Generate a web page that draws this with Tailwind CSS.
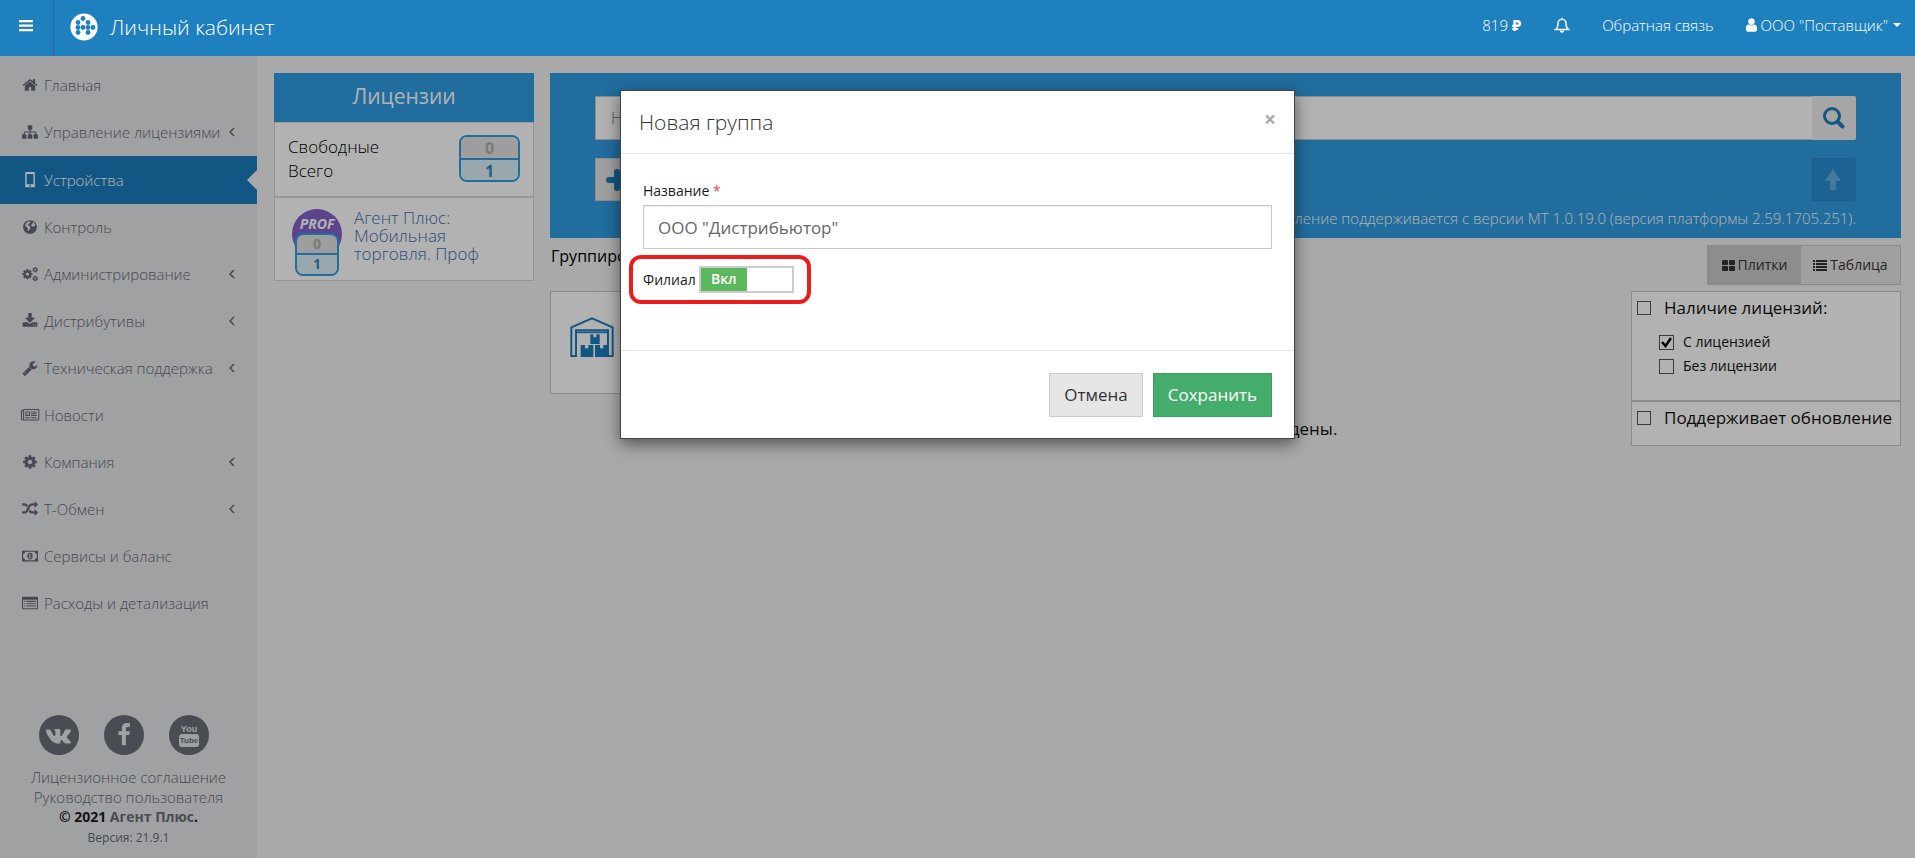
<!DOCTYPE html>
<html lang="ru">
<head>
    <meta charset="UTF-8">
    <meta name="viewport" content="width=device-width, initial-scale=1.0">
    <title>Личный кабинет</title>
    <script src="https://cdn.jsdelivr.net/npm/@tailwindcss/browser@4"></script>
</head>
<body class="min-h-screen flex flex-col bg-[#f2f2f4] font-['Open_Sans','Noto_Sans',sans-serif] text-[14px] leading-[20px] text-[#1b1b1e]">

<!-- Header -->
<header class="relative z-20 h-14 flex items-stretch bg-[#1e80bf] text-white">
    <button type="button" aria-label="Меню" class="w-[54px] border-r border-[#3f6480] flex items-center justify-center pr-0.5 pb-1">
        <svg class="w-[14px] h-[12px]" viewBox="0 0 14 12" fill="currentColor"><path d="M0 0h14v2.200H0zM0 4.500h14v2.200H0zM0 9h14v2.200H0z"/></svg>
    </button>
    <a href="#" class="flex items-center gap-3 pl-4 pb-0.5">
        <svg class="w-7 h-7" viewBox="0 0 28 28"><circle cx="14" cy="14" r="13.6" fill="#fff"/>
            <g fill="#1e80bf"><circle cx="13" cy="5.5" r="2.400"/><circle cx="8" cy="9.500" r="2.400"/><circle cx="18" cy="9.500" r="2.400"/><circle cx="8" cy="14.500" r="2.400"/><circle cx="13" cy="14.500" r="2.400"/><circle cx="18" cy="14.500" r="2.400"/><circle cx="23" cy="14.500" r="2.400"/><circle cx="8" cy="19.500" r="2.400"/><circle cx="18" cy="19.500" r="2.400"/></g>
        </svg>
        <span class="text-[21px] font-light">Личный кабинет</span>
    </a>
    <nav class="ml-auto flex items-center pr-[14px] pb-[6px] text-[15px] font-light">
        <a href="#" class="mr-[33px]">819 <span class="font-extrabold">₽</span></a>
        <button type="button" aria-label="Уведомления" class="mr-8">
            <svg class="w-4 h-4" viewBox="0 0 16 16" fill="none" stroke="currentColor" stroke-width="1.4"><path d="M8 .8v1.4M1.500 12.500C3.500 11 4 9 4 6.500 4 4 5.500 2.400 8 2.400S12 4 12 6.500c0 2.500.5 4.500 2.500 6zM6.500 13.500a1.500 1.500 0 0 0 3 0"/></svg>
        </button>
        <a href="#" class="mr-[31px]">Обратная связь</a>
        <button type="button" class="flex items-center gap-[3px]">
            <svg class="w-[13px] h-[14px]" viewBox="200 100 1400 1600" fill="currentColor"><path d="M1536 1399q0 109-62.500 187t-150.500 78h-854q-88 0-150.500-78t-62.500-187q0-85 8.500-160.500t31.500-152 58.500-131 94-89 134.500-34.500q131 128 313 128t313-128q76 0 134.500 34.500t94 89 58.500 131 31.500 152 8.500 160.500zm-256-887q0 159-112.500 271.500t-271.500 112.500-271.500-112.500-112.500-271.500 112.500-271.500 271.500-112.500 271.500 112.500 112.500 271.500z"/></svg>
            <span>ООО "Поставщик"</span>
            <svg class="w-2 h-1 ml-0.5" viewBox="0 0 8 4" fill="currentColor"><path d="M0 0h8L4 4z"/></svg>
        </button>
    </nav>
</header>

<div class="relative flex-1 flex">
    <!-- Sidebar -->
    <aside class="w-[257px] shrink-0 bg-[#e6e7ea] text-[#626975] flex flex-col pt-[6px] pb-[9px]">
        <nav id="menu" class="flex flex-col text-[15px] font-light"></nav>
        <div class="mt-auto text-center text-[15px] font-light">
            <div class="flex justify-center gap-[25px] pr-[9px] mb-3">
                <a href="#" aria-label="ВКонтакте" class="w-10 h-10 rounded-full bg-[#676d78] text-[#e6e7ea] flex items-center justify-center">
                    <svg class="w-[26px] h-6" viewBox="0 0 1920 1792" fill="currentColor"><path d="M1853 520q23 64-150 294-24 32-65 85-40 51-55 72t-30.500 49.500-12 42 13 34.500 32.500 43 57 53q4 2 5 4 141 131 191 221 3 5 6.500 12.500t7 26.500-.5 34-25 27.500-59 12.500l-256 4q-24 5-56-5t-52-22l-20-12q-30-21-70-64t-68.500-77.500-61-58-56.500-15.500q-3 1-8 3.500t-17 14.500-21.500 29.500-17 52-6.500 77.500q0 15-3.500 27.500t-7.500 18.500l-4 5q-18 19-53 22h-115q-71 4-146-16.500t-131.500-53-103-66-70.500-57.500l-25-24q-10-10-27.500-30t-71.500-91-106-151-122.500-211-130.500-272q-6-16-6-27t3-16l4-6q15-19 57-19l274-2q12 2 23 6.500t16 8.500l5 3q16 11 24 32 20 50 46 103.500t41 81.500l16 29q29 60 56 104t48.500 68.500 41.500 38.500 34 14 27-5q2-1 5-5t12-22 13.500-47 9.500-81 0-125q-2-40-9-73t-14-46l-6-12q-25-34-85-43-13-2 5-24 16-19 38-30 53-26 239-24 82 1 135 13 20 5 33.500 13.500t20.500 24 10.500 32 3.500 45.500-1 55-2.500 70.500-1.500 82.500q0 11-1 42t-.5 48 3.500 40.500 11.500 39 22.500 24.500q8 2 17 4t26-11 38-34.500 52-67 68-107.500q60-104 107-225 4-10 10-17.500t11-10.500l4-3 5-2.500 13-3 20-.5 288-2q39-5 64 2.500t31 16.500z"/></svg>
                </a>
                <a href="#" aria-label="Facebook" class="w-10 h-10 rounded-full bg-[#676d78] text-[#e6e7ea] flex items-center justify-center">
                    <svg class="w-6 h-6" viewBox="0 0 1792 1792" fill="currentColor"><path d="M1343 12v264h-157q-86 0-116 36t-30 108v189h293l-39 296h-254v759h-306v-759h-255v-296h255v-218q0-186 104-288.500t277-102.500q147 0 228 12z"/></svg>
                </a>
                <a href="#" aria-label="YouTube" class="w-10 h-10 rounded-full bg-[#676d78] text-[#e6e7ea] flex flex-col items-center justify-center font-['Liberation_Sans_Narrow','Liberation_Sans',sans-serif] text-[9px] leading-[10px] font-bold">
                    <span>You</span>
                    <span class="bg-[#e6e7ea] text-[#676d78] rounded-[3px] w-5 h-[13px] leading-[13px] text-[8px]">Tube</span>
                </a>
            </div>
            <a href="#" class="block">Лицензионное соглашение</a>
            <a href="#" class="block">Руководство пользователя</a>
            <p class="font-bold text-[#1b1b1e] text-[14px]">© 2021 <a href="#" class="text-[#676d78]">Агент Плюс</a>.</p>
            <p class="text-[12px] leading-[22px] font-normal">Версия: 21.9.1</p>
        </div>
    </aside>

    <!-- Content -->
    <main class="flex-1 flex gap-4 pl-[17px] pr-[14px] pt-[17px] items-start">
        <section class="w-[260px] shrink-0">
            <h2 class="h-[49px] bg-[#2e9ce3] text-white text-[21px] leading-[47px] text-center">Лицензии</h2>
            <div class="h-[76px] bg-white border border-[#d8d8d8] border-b-2 flex justify-between px-[13px] pt-3 text-[17px] leading-6">
                <p class="font-light text-black">Свободные<br>Всего</p>
                <div class="w-[61px] h-[47px] border-2 border-[#2e9ce3] rounded-lg overflow-hidden text-center text-[16px] font-bold leading-[22px]">
                    <div class="h-[23px] bg-[#e3e3e3] border-b-2 border-[#2e9ce3] text-[#b0b0b0]">0</div>
                    <div class="h-[21px] bg-[#def0fa] text-[#2e86c4]">1</div>
                </div>
            </div>
            <div class="h-[83px] bg-white border border-t-0 border-[#d8d8d8] flex gap-3 pl-[17px] pt-[11px]">
                <div class="relative w-[50px] h-[68px] shrink-0">
                    <div class="w-[50px] h-[50px] rounded-full bg-[#8462cb] text-white text-[14px] font-bold italic text-center leading-[30px]">PROF</div>
                    <div class="absolute left-[3px] top-6 w-11 h-[43px] border-2 border-[#2e9ce3] rounded-lg overflow-hidden text-center text-[14px] font-bold leading-[18px]">
                        <div class="h-5 bg-[#e3e3e3] border-b-2 border-[#2e9ce3] text-[#b0b0b0]">0</div>
                        <div class="h-[19px] bg-[#def0fa] text-[#2e86c4]">1</div>
                    </div>
                </div>
                <a href="#" class="text-[17px] leading-[18px] font-light text-[#3f6fae]">Агент Плюс:<br>Мобильная<br>торговля. Проф</a>
            </div>
        </section>

        <section class="flex-1 min-w-0">
            <div class="h-[165px] bg-[#2e9ce3] px-[45px] pt-[23px]">
                <div class="flex">
                    <input type="text" aria-label="Поиск" placeholder="Название" class="flex-1 h-11 bg-white border border-r-0 border-[#c8c8c8] px-[15px] text-[16px] font-light placeholder:text-[#777]">
                    <button type="button" aria-label="Найти" class="w-11 h-11 bg-[#eeeeee] text-[#1b7cbd] flex items-center justify-center rounded-r-[2px]">
                        <svg class="w-6 h-6" viewBox="0 0 24 24" fill="none" stroke="currentColor"><circle cx="10" cy="10" r="7.500" stroke-width="3"/><path d="M15.500 15.500L20.500 20.500" stroke-width="4" stroke-linecap="round"/></svg>
                    </button>
                </div>
                <div class="flex justify-between mt-[18px]">
                    <button type="button" aria-label="Добавить" class="w-11 h-[43px] bg-[#e6e6e6] border border-[#ccc] text-[#1b7cbd] flex items-center justify-center">
                        <svg class="w-[22px] h-[22px]" viewBox="0 0 22 22" stroke="currentColor" stroke-width="6" stroke-linecap="round"><path d="M11 3v16M3 11h16"/></svg>
                    </button>
                    <button type="button" aria-label="Вверх" disabled class="w-11 h-[43px] bg-[#2a8fd0] border border-[#2787c5] text-[#5cb0e4] flex items-center justify-center pr-0.5 rounded-[2px]">
                        <svg class="w-4 h-[21px]" viewBox="0 0 16 21" fill="currentColor"><path d="M8 0l8 12h-5v9H5v-9H0z"/></svg>
                    </button>
                </div>
                <p class="mt-[6px] text-right text-[15px] leading-[22px] font-light text-white">Обновление поддерживается с версии МТ 1.0.19.0 (версия платформы 2.59.1705.251).</p>
            </div>

            <div class="flex justify-between mt-[7px]">
                <p class="text-[16px] leading-[22px] pl-px text-black">Группировка устройств</p>
                <div class="h-10 flex border border-[#c8c8c8] text-[14px] text-[#333]">
                    <button type="button" class="w-[93px] bg-[#cbcbcb] flex items-center justify-center gap-[3px]">
                        <svg class="w-[13px] h-[11px]" viewBox="0 0 13 11" fill="currentColor"><rect width="6" height="5" rx="1"/><rect x="7" width="6" height="5" rx="1"/><rect y="6" width="6" height="5" rx="1"/><rect x="7" y="6" width="6" height="5" rx="1"/></svg>
                        Плитки
                    </button>
                    <button type="button" class="w-[99px] bg-[#e6e6e6] flex items-center justify-center gap-[3px]">
                        <svg class="w-[14px] h-[11px]" viewBox="0 0 14 11" fill="currentColor"><path d="M0 0h2v2H0zM3 0h11v2H3zM0 3h2v2H0zM3 3h11v2H3zM0 6h2v2H0zM3 6h11v2H3zM0 9h2v2H0zM3 9h11v2H3z"/></svg>
                        Таблица
                    </button>
                </div>
            </div>

            <div class="flex items-start gap-[15px] mt-[6px]">
                <div class="flex-1">
                    <div class="w-[340px] h-[103px] bg-white border border-[#c8c8c8] pl-[19px] pt-[25px]">
                        <svg class="w-11 h-10" viewBox="45 51 132 120" fill="none" stroke="#1b7cbd" stroke-width="6"><path d="M49 168V82l62-27 62 27v86h-14V91H63v77z"/><path d="M63 97h96" stroke-width="5"/><path d="M106 103h9v9h9v-9h10v29h-28zM77 135h13v10h10v-10h15v36H77zM120 135h15v10h10v-10h15v36h-40z" fill="#1b7cbd" stroke="none"/></svg>
                    </div>
                    <p class="mt-6 text-center text-[17px] leading-[22px] text-[#111]">Устройства, соответствующие условиям отбора, не найдены.</p>
                </div>
                <div class="w-[270px] bg-white border border-[#c8c8c8] text-[#111]">
                    <div class="h-[110px] border-b-2 border-[#c8c8c8] pl-[5px] pt-1">
                        <label class="flex items-center gap-[13px] text-[17px] leading-6"><input type="checkbox" class="appearance-none w-[14px] h-[14px] border border-[#555]">Наличие лицензий:</label>
                        <label class="flex items-center gap-[9px] ml-[22px] mt-[10px] text-[14px] leading-6">
                            <span class="relative flex"><input type="checkbox" checked class="appearance-none w-[15px] h-[15px] border border-[#555]">
                            <svg class="absolute left-[2px] top-[2px] w-[11px] h-[11px] pointer-events-none" viewBox="0 0 11 11" fill="none" stroke="#000" stroke-width="2.500"><path d="M1 5l3.500 4L10 1"/></svg></span>С лицензией</label>
                        <label class="flex items-center gap-[9px] ml-[22px] text-[14px] leading-6"><input type="checkbox" class="appearance-none w-[15px] h-[15px] border border-[#555]">Без лицензии</label>
                    </div>
                    <div class="h-[43px] pl-[5px] pt-1">
                        <label class="flex items-center gap-[13px] text-[17px] leading-6"><input type="checkbox" class="appearance-none w-[14px] h-[14px] border border-[#555]">Поддерживает обновление</label>
                    </div>
                </div>
            </div>
        </section>
    </main>

    <!-- Modal -->
    <div class="absolute inset-0 z-10 bg-black/30">
        <div role="dialog" aria-labelledby="modalTitle" class="w-[675px] mx-auto mt-[34px] bg-white border border-[#444] shadow-[0_5px_15px_rgba(0,0,0,0.5)]">
            <div class="h-[63px] flex items-center justify-between px-[18px] border-b border-[#e5e5e5]">
                <h4 id="modalTitle" class="text-[21px] font-light text-[#333]">Новая группа</h4>
                <button type="button" aria-label="Закрыть" class="pb-[6px] text-[21px] font-bold text-[#aaa]">×</button>
            </div>
            <form class="h-[196px] px-[22px] pt-[27px]">
                <label for="groupName" class="block text-[14px]">Название <span class="text-[#ee4455]">*</span></label>
                <input id="groupName" type="text" value='ООО "Дистрибьютор"' class="block w-full h-11 mt-1 px-[14px] border border-[#c8c8c8] text-[17px] text-[#666] shadow-[inset_0_1px_1px_rgba(0,0,0,0.075)]">
                <div class="relative flex items-center gap-[3px] mt-[17px] w-fit">
                    <label for="branch">Филиал</label>
                    <button id="branch" type="button" role="switch" aria-checked="true" class="w-[95px] h-[27px] border-2 border-[#ccc] bg-white flex">
                        <span class="w-[46px] h-[23px] leading-[22px] bg-[#5cb85c] text-white font-semibold text-[14px]">Вкл</span>
                    </button>
                    <span class="absolute -left-[14px] -right-[17px] -top-[11px] -bottom-[11px] border-4 border-[#ed1c1c] rounded-xl pointer-events-none"></span>
                </div>
            </form>
            <div class="h-[88px] flex items-start justify-end gap-[10px] px-[22px] pt-[22px] border-t border-[#e5e5e5] text-[17px]">
                <button type="button" class="h-11 px-[14px] bg-[#e6e6e6] border border-[#ccc] text-[#333]">Отмена</button>
                <button type="submit" class="h-11 px-[14px] bg-[#45ad6b] border border-[#3d9c5f] text-white">Сохранить</button>
            </div>
        </div>
    </div>
</div>

<script>
    const icons = {
        home: '<path d="M1472 992v480q0 26-19 45t-45 19h-384v-384h-256v384h-384q-26 0-45-19t-19-45v-480q0-1 .5-3t.5-3l575-474 575 474q1 2 1 6zm223-69l-62 74q-8 9-21 11h-3q-13 0-21-7l-692-577-692 577q-12 8-24 7-13-2-21-11l-62-74q-8-10-7-23.500t11-21.500l719-599q32-26 76-26t76 26l244 204v-195q0-14 9-23t23-9h192q14 0 23 9t9 23v408l219 182q10 8 11 21.500t-7 23.500z"/>',
        sitemap: '<path d="M1792 1248v320q0 40-28 68t-68 28h-320q-40 0-68-28t-28-68v-320q0-40 28-68t68-28h96v-192h-512v192h96q40 0 68 28t28 68v320q0 40-28 68t-68 28h-320q-40 0-68-28t-28-68v-320q0-40 28-68t68-28h96v-192h-512v192h96q40 0 68 28t28 68v320q0 40-28 68t-68 28h-320q-40 0-68-28t-28-68v-320q0-40 28-68t68-28h96v-192q0-52 38-90t90-38h512v-192h-96q-40 0-68-28t-28-68v-320q0-40 28-68t68-28h320q40 0 68 28t28 68v320q0 40-28 68t-68 28h-96v192h512q52 0 90 38t38 90v192h96q40 0 68 28t28 68z"/>',
        mobile: '<path fill-rule="evenodd" d="M460 0h880q100 0 100 100v1520q0 100-100 100h-880q-100 0-100-100v-1520q0-100 100-100zm60 230v1140h760v-1140zm380 1230a90 90 0 1 0 1 0z"/>',
        globe: '<path fill-rule="evenodd" d="M896 128a768 768 0 1 0 1 0zM800 260l160 60-60 140-170 80-60 170 170 60 120 140-60 180-160 260-90-80-30-260-150-170-130-40q10-180 90-300l150-150zm420 50q200 120 270 340l-100 220-90-60-140 70-130-120 40-170 120-80z"/>',
        cogs: '<g transform="translate(-60 250) scale(.74)"><path d="M1152 896q0-106-75-181t-181-75-181 75-75 181 75 181 181 75 181-75 75-181zm512-109v222q0 12-8 23t-20 13l-185 28q-19 54-39 91 35 50 107 138 10 12 10 25t-9 23q-27 37-99 108t-94 71q-12 0-26-9l-138-108q-44 23-91 38-16 136-29 186-7 28-36 28h-222q-14 0-24.500-8.500t-11.500-21.500l-28-184q-49-16-90-37l-141 107q-10 9-25 9-14 0-25-11-126-114-165-168-7-10-7-23 0-12 8-23 15-21 51-66.500t54-70.500q-27-50-41-99l-183-27q-13-2-21-12.500t-8-23.500v-222q0-12 8-23t19-13l186-28q14-46 39-92-40-57-107-138-10-12-10-24 0-10 9-23 26-36 98.500-107.500t94.500-71.500q13 0 26 10l138 107q44-23 91-38 16-136 29-186 7-28 36-28h222q14 0 24.500 8.500t11.500 21.500l28 184q49 16 90 37l142-107q9-9 24-9 13 0 25 10 129 119 165 170 7 8 7 22 0 12-8 23-15 21-51 66.500t-54 70.500q26 50 41 98l183 28q13 2 21 12.500t8 23.500z"/></g><g fill="none" stroke="currentColor"><circle cx="1480" cy="420" r="180" stroke-width="150"/><circle cx="1480" cy="1400" r="180" stroke-width="150"/><circle cx="1480" cy="420" r="270" stroke-width="90" stroke-dasharray="120 92"/><circle cx="1480" cy="1400" r="270" stroke-width="90" stroke-dasharray="120 92"/></g>',
        download: '<path d="M1344 1344q0-26-19-45t-45-19-45 19-19 45 19 45 45 19 45-19 19-45zm256 0q0-26-19-45t-45-19-45 19-19 45 19 45 45 19 45-19 19-45zm128-224v320q0 40-28 68t-68 28h-1472q-40 0-68-28t-28-68v-320q0-40 28-68t68-28h465l135 136q58 56 136 56t136-56l136-136h464q40 0 68 28t28 68zm-325-569q17 41-14 70l-448 448q-18 19-45 19t-45-19l-448-448q-31-29-14-70 17-39 59-39h256v-448q0-26 19-45t45-19h256q26 0 45 19t19 45v448h256q42 0 59 39z"/>',
        wrench: '<path d="M448 1472q0-26-19-45t-45-19-45 19-19 45 19 45 45 19 45-19 19-45zm644-420l-682 682q-37 37-90 37-52 0-91-37l-106-108q-38-36-38-90 0-53 38-91l681-681q39 98 114.500 173.500t173.500 114.500zm634-435q0 39-23 106-47 134-164.500 217.500t-258.500 83.500q-185 0-316.500-131.500t-131.500-316.500 131.500-316.500 316.500-131.500q58 0 121.500 16.500t107.500 46.500q16 11 16 28t-16 28l-293 169v224l193 107q5-3 79-48.500t135.500-81 70.500-35.500q15 0 23.500 10t8.500 25z"/>',
        news: '<path fill="none" stroke="currentColor" stroke-width="120" d="M180 420H-60v880q0 160 120 160h1700q120 0 120-120V280H180v1060q0 120-120 120"/><path fill="none" stroke="currentColor" stroke-width="120" d="M440 560h400v380H440z"/><path d="M1000 500h640v120h-640zM1000 700h640v120h-640zM1000 900h640v120h-640zM380 1150h520v120H380zM1000 1150h640v120h-640z"/>',
        cog: '<path d="M1152 896q0-106-75-181t-181-75-181 75-75 181 75 181 181 75 181-75 75-181zm512-109v222q0 12-8 23t-20 13l-185 28q-19 54-39 91 35 50 107 138 10 12 10 25t-9 23q-27 37-99 108t-94 71q-12 0-26-9l-138-108q-44 23-91 38-16 136-29 186-7 28-36 28h-222q-14 0-24.500-8.500t-11.500-21.500l-28-184q-49-16-90-37l-141 107q-10 9-25 9-14 0-25-11-126-114-165-168-7-10-7-23 0-12 8-23 15-21 51-66.500t54-70.500q-27-50-41-99l-183-27q-13-2-21-12.500t-8-23.500v-222q0-12 8-23t19-13l186-28q14-46 39-92-40-57-107-138-10-12-10-24 0-10 9-23 26-36 98.500-107.500t94.500-71.500q13 0 26 10l138 107q44-23 91-38 16-136 29-186 7-28 36-28h222q14 0 24.500 8.500t11.500 21.500l28 184q49 16 90 37l142-107q9-9 24-9 13 0 25 10 129 119 165 170 7 8 7 22 0 12-8 23-15 21-51 66.500t-54 70.500q26 50 41 98l183 28q13 2 21 12.500t8 23.500z"/>',
        random: '<path d="M666 481q-60 92-137 273-22-45-37-72.500t-40.500-63.500-51-56.500-63-35-81.500-14.500h-224q-14 0-23-9t-9-23v-192q0-14 9-23t23-9h224q250 0 410 225zm1126 799q0 14-9 23l-320 320q-9 9-23 9-13 0-22.500-9.500t-9.500-22.500v-192q-32 0-85 .5t-81 1-73-1-71-5-64-10.500-63-18.500-58-28.500-59-40-55-53.500-56-69.500q59-93 136-273 22 45 37 72.500t40.500 63.500 51 56.500 63 35 81.500 14.500h256v-192q0-14 9-23t23-9q12 0 24 10l319 319q9 9 9 23zm0-896q0 14-9 23l-320 320q-9 9-23 9-13 0-22.500-9.500t-9.500-22.500v-192h-256q-48 0-87 15t-69 45-51 61.500-45 77.500q-32 62-78 171-29 66-49.500 111t-54 105-64 100-74 83-90 68.500-106.500 42-128 16.500h-224q-14 0-23-9t-9-23v-192q0-14 9-23t23-9h224q48 0 87-15t69-45 51-61.500 45-77.500q32-62 78-171 29-66 49.500-111t54-105 64-100 74-83 90-68.500 106.500-42 128-16.500h256v-192q0-14 9-23t23-9q12 0 24 10l319 319q9 9 9 23z"/>',
        money: '<path fill-rule="evenodd" d="M0 300h1792v1200H0zM380 430q0 200-250 250v440q250 50 250 250h1032q0-200 250-250V680q-250-50-250-250z"/><path fill-rule="evenodd" d="M896 520q300 0 300 380t-300 380-300-380 300-380zm-120 200v100h70v240h-90v90h280v-90h-90V680h-80z"/>',
        list: '<path fill-rule="evenodd" d="M100 200h1592q100 0 100 100v1200q0 100-100 100H100q-100 0-100-100V300q0-100 100-100zm20 340v940h1552V540z"/><path d="M240 650h140v130H240zM500 650h1052v130H500zM240 910h140v130H240zM500 910h1052v130H500zM240 1170h140v130H240zM500 1170h1052v130H500z"/>'
    };

    // name, icon, has submenu
    const items = [
        ['Главная', 'home', false],
        ['Управление лицензиями', 'sitemap', true],
        ['Устройства', 'mobile', false],
        ['Контроль', 'globe', false],
        ['Администрирование', 'cogs', true],
        ['Дистрибутивы', 'download', true],
        ['Техническая поддержка', 'wrench', true],
        ['Новости', 'news', false],
        ['Компания', 'cog', true],
        ['Т-Обмен', 'random', true],
        ['Сервисы и баланс', 'money', false],
        ['Расходы и детализация', 'list', false]
    ];

    const chevron = '<svg class="ml-auto w-[6px] h-[10px]" viewBox="0 0 6 10" fill="none" stroke="currentColor" stroke-width="1.500"><path d="M5 1L1 5l4 4"/></svg>';
    const arrow = '<span class="absolute right-0 top-[14px] border-y-[10px] border-r-[10px] border-y-transparent border-r-[#f2f2f4]"></span>';

    document.getElementById('menu').innerHTML = items.map(([name, icon, sub]) => {
        const active = name === 'Устройства';
        const state = active ? 'h-12 bg-[#1b7cbd] text-white' : 'h-[47px] pb-0.5';
        return `
        <a href="#" class="relative flex items-center gap-[6px] px-[22px] ${state}">
            <svg class="w-4 h-4 overflow-visible" viewBox="0 0 1792 1792" fill="currentColor">${icons[icon]}</svg>
            <span>${name}</span>${sub ? chevron : ''}${active ? arrow : ''}
        </a>`;
    }).join('');
</script>
</body>
</html>
